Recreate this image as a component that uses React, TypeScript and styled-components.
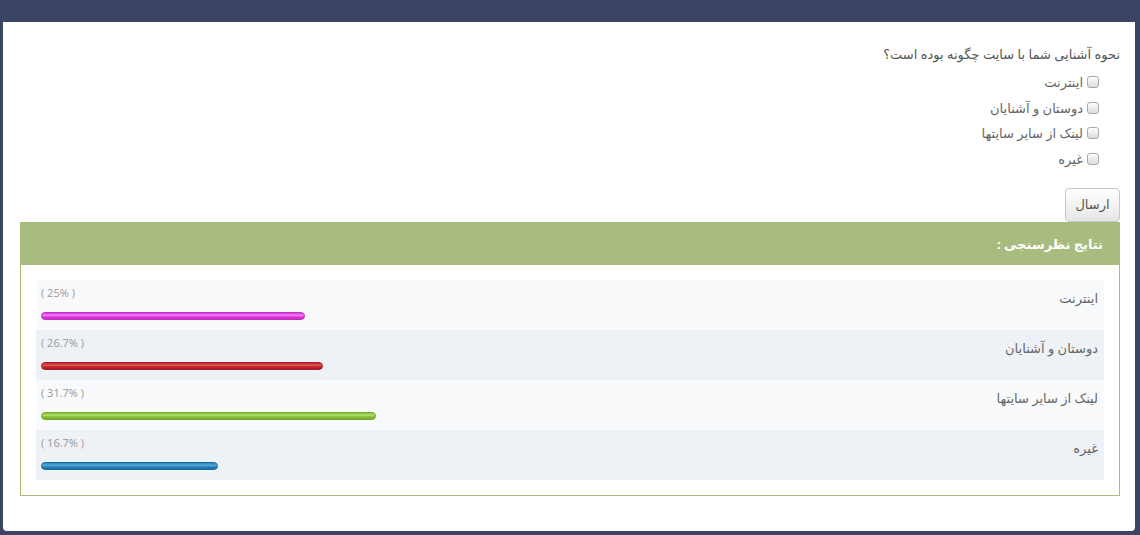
import React from "react";
import styled, { createGlobalStyle } from "styled-components";

const Global = createGlobalStyle`
  html, body { margin: 0; padding: 0; background: #3b4563; }
  body { font-family: "Open Sans", "DejaVu Sans", sans-serif; }
  * { box-sizing: border-box; }
`;

const Frame = styled.div`
  width: 1140px;
  height: 535px;
  background: #3b4563;
  padding: 22px 5px 4px 3px;
`;

const Sheet = styled.div`
  height: 100%;
  background: #ffffff;
  border-radius: 0 0 4px 4px;
  padding: 22px 15px 0 17px;
  direction: rtl;
`;

const Question = styled.div`
  font-size: 13px;
  line-height: 20px;
  color: #555;
`;

const Options = styled.ul`
  list-style: none;
  margin: 5px 0 0;
  padding: 0 21px 0 0;
`;

const Option = styled.li`
  height: 25.7px;
  display: flex;
  align-items: center;
  gap: 4px;
  font-size: 13px;
  color: #666;
`;

const Box = styled.input`
  appearance: none;
  width: 12px;
  height: 12px;
  margin: 0;
  border: 1px solid #a9a9a9;
  border-radius: 3px;
  background: linear-gradient(#fdfdfd, #dcdcdc);
`;

const Actions = styled.div`
  display: flex;
  margin-top: 16px;
`;

const Button = styled.button`
  width: 55px;
  height: 34px;
  font-family: inherit;
  font-size: 13px;
  color: #555;
  border: 1px solid #c8c8c8;
  border-radius: 4px;
  background: linear-gradient(#ffffff, #e6e6e6);
  padding: 0 0 2px;
`;

const Panel = styled.section`
  border: 1px solid #a8bc7e;
`;

const PanelHead = styled.div`
  height: 42px;
  background: #a8bc7e;
  color: #fff;
  font-weight: bold;
  font-size: 13px;
  display: flex;
  align-items: center;
  padding: 0 16px 0 0;
`;

const PanelBody = styled.div`
  padding: 15px;
`;

const Row = styled.div<{ $alt: boolean }>`
  height: 50px;
  padding: 5px 6px 10px 5px;
  background: ${(p) => (p.$alt ? "#eef2f6" : "#f8fafc")};
`;

const RowTop = styled.div`
  display: flex;
  justify-content: space-between;
  align-items: flex-start;
  height: 23px;
`;

const Label = styled.span`
  margin-top: 3px;
  font-size: 13px;
  line-height: 20px;
  color: #666;
`;

const Percent = styled.span`
  direction: ltr;
  font-size: 11px;
  line-height: 16px;
  color: #999;
  white-space: pre;
`;

const Track = styled.div`
  margin-top: 4px;
  height: 8px;
  direction: ltr;
`;

const Bar = styled.div<{ $c: string; $d: string; $l: string }>`
  height: 8px;
  border-radius: 4px;
  border: 1px solid ${(p) => p.$d};
  background: linear-gradient(${(p) => p.$c} 0%, ${(p) => p.$l} 45%, ${(p) => p.$c} 60%, ${(p) => p.$d} 100%);
`;

const results = [
  { label: "اینترنت", pct: 25, text: "( 25% )", c: "#e03ee0", d: "#c22cc2", l: "#f27ef2" },
  { label: "دوستان و آشنایان", pct: 26.7, text: "( 26.7% )", c: "#c8282c", d: "#a61c20", l: "#de5a5c" },
  { label: "لینک از سایر سایتها", pct: 31.7, text: "( 31.7% )", c: "#8cc43a", d: "#72a82a", l: "#b0dc6c" },
  { label: "غیره", pct: 16.7, text: "( 16.7% )", c: "#2a86be", d: "#1c6c9e", l: "#5aaad8" },
];

const options = ["اینترنت", "دوستان و آشنایان", "لینک از سایر سایتها", "غیره"];

export default function App() {
  return (
    <>
      <Global />
      <Frame>
        <Sheet>
          <Question>نحوه آشنایی شما با سایت چگونه بوده است؟</Question>
          <Options>
            {options.map((o) => (
              <Option key={o}>
                <Box type="checkbox" />
                <span>{o}</span>
              </Option>
            ))}
          </Options>
          <Actions>
            <Button>ارسال</Button>
          </Actions>
          <Panel>
            <PanelHead>نتایج نظرسنجی :</PanelHead>
            <PanelBody>
              {results.map((r, i) => (
                <Row key={r.label} $alt={i % 2 === 1}>
                  <RowTop>
                    <Label>{r.label}</Label>
                    <Percent>{r.text}</Percent>
                  </RowTop>
                  <Track>
                    <Bar $c={r.c} $d={r.d} $l={r.l} style={{ width: `${r.pct}%` }} />
                  </Track>
                </Row>
              ))}
            </PanelBody>
          </Panel>
        </Sheet>
      </Frame>
    </>
  );
}
